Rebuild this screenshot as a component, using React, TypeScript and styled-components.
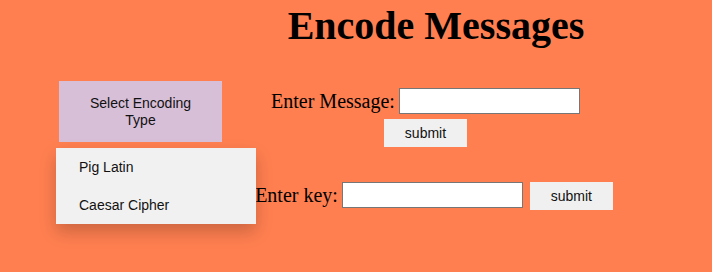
import styled, { createGlobalStyle } from "styled-components";

const GlobalStyle = createGlobalStyle`
    body {
        margin: 0;
        background: #ff7f50;
        font-family: "Liberation Serif", "Times New Roman", serif;
        color: #000;
    }
`;

const Page = styled.div`
    display: flex;
    min-height: 272px;
`;

const Sidebar = styled.aside`
    flex: 0 0 163px;
    padding: 81px 0 0 59px;
`;

const Dropdown = styled.div`
    position: relative;
    width: 163px;
`;

const DropButton = styled.div`
    height: 61px;
    padding: 0 16px;
    display: flex;
    align-items: center;
    justify-content: center;
    text-align: center;
    background: #d8bfd8;
    font-family: "Liberation Sans", Arial, sans-serif;
    font-size: 14px;
    line-height: 17px;
    color: #111;
`;

const Menu = styled.div`
    position: absolute;
    top: calc(100% + 6px);
    left: -3px;
    width: 200px;
    background: #f1f1f1;
    box-shadow: 0 8px 16px 0 rgba(0, 0, 0, 0.2);
    z-index: 2;
`;

const MenuItem = styled.a`
    display: block;
    padding: 12px 23px;
    font-family: "Liberation Sans", Arial, sans-serif;
    font-size: 14px;
    line-height: 14px;
    color: #111;
    text-decoration: none;
`;

const Main = styled.main`
    flex: 1;
    padding-right: 62px;
    display: flex;
    flex-direction: column;
    align-items: center;
`;

const Title = styled.h1`
    margin: 3px 0 0;
    font-size: 40px;
    line-height: 46px;
    font-weight: bold;
`;

const MessageForm = styled.form`
    display: flex;
    flex-direction: column;
    align-items: center;
    margin: 39px 21px 0 0;
`;

const KeyForm = styled.form`
    display: flex;
    align-items: flex-start;
    margin: 35px 4px 0 0;
`;

const Row = styled.div`
    display: flex;
    align-items: flex-start;
    gap: 4px;
`;

const Label = styled.label`
    font-size: 20px;
    line-height: 26px;
`;

const TextInput = styled.input`
    box-sizing: border-box;
    width: 181px;
    height: 26px;
    border: 1px solid #767676;
    background: #fff;
    padding: 2px 4px;
`;

const Submit = styled.button<{ $top?: number; $left?: number }>`
    width: 83px;
    height: 28px;
    margin-top: ${(p) => p.$top ?? 0}px;
    margin-left: ${(p) => p.$left ?? 0}px;
    border: none;
    background: #f0f0f0;
    font-family: "Liberation Sans", Arial, sans-serif;
    font-size: 14px;
    color: #111;
    padding: 0;
`;

export default function App() {
    return (
        <Page>
            <GlobalStyle />
            <Sidebar>
                <Dropdown>
                    <DropButton>Select Encoding Type</DropButton>
                    <Menu>
                        <MenuItem>Pig Latin</MenuItem>
                        <MenuItem>Caesar Cipher</MenuItem>
                    </Menu>
                </Dropdown>
            </Sidebar>
            <Main>
                <Title>Encode Messages</Title>
                <MessageForm onSubmit={(e) => e.preventDefault()}>
                    <Row>
                        <Label>Enter Message:</Label>
                        <TextInput type="text" />
                    </Row>
                    <Submit type="submit" $top={5}>submit</Submit>
                </MessageForm>
                <KeyForm onSubmit={(e) => e.preventDefault()}>
                    <Row>
                        <Label>Enter key:</Label>
                        <TextInput type="text" />
                    </Row>
                    <Submit type="submit" $left={7}>submit</Submit>
                </KeyForm>
            </Main>
        </Page>
    );
}
